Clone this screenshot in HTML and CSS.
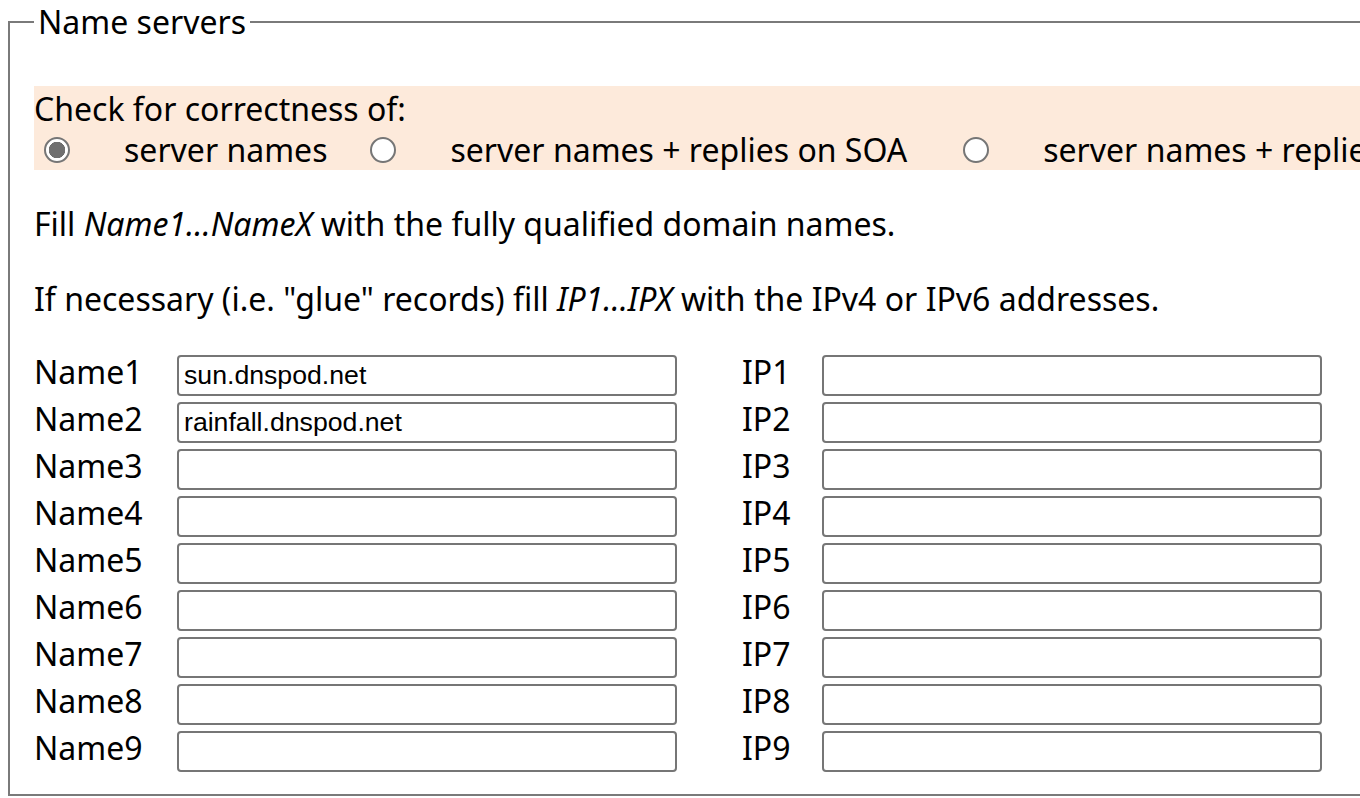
FILE: index.html
```html
<!DOCTYPE html>
<html lang="en">
  <head>
    <meta charset="UTF-8" />
    <meta name="viewport" content="width=device-width, initial-scale=1.0" />
    <title>Name servers</title>
    <link rel="stylesheet" href="styles.css">
  </head>
  <body>
    <!-- 名称服务器表单 -->
    <fieldset class="ns">
      <legend>Name servers</legend>

      <!-- 检查方式 -->
      <div class="check">
        <div>Check for correctness of:</div>
        <div class="opts">
          <input type="radio" name="check" id="c1" checked>
          <label for="c1">server names</label>
          <input type="radio" name="check" id="c2">
          <label for="c2">server names + replies on SOA</label>
          <input type="radio" name="check" id="c3">
          <label for="c3">server names + replies on SOA and NS</label>
        </div>
      </div>

      <p>Fill <em>Name1...NameX</em> with the fully qualified domain names.</p>
      <p>If necessary (i.e. "glue" records) fill <em>IP1...IPX</em> with the IPv4 or IPv6 addresses.</p>

      <!-- 名称和IP输入区 -->
      <div class="grid">
        <label>Name1</label><input type="text" value="sun.dnspod.net"><label class="ip">IP1</label><input type="text">
        <label>Name2</label><input type="text" value="rainfall.dnspod.net"><label class="ip">IP2</label><input type="text">
        <label>Name3</label><input type="text"><label class="ip">IP3</label><input type="text">
        <label>Name4</label><input type="text"><label class="ip">IP4</label><input type="text">
        <label>Name5</label><input type="text"><label class="ip">IP5</label><input type="text">
        <label>Name6</label><input type="text"><label class="ip">IP6</label><input type="text">
        <label>Name7</label><input type="text"><label class="ip">IP7</label><input type="text">
        <label>Name8</label><input type="text"><label class="ip">IP8</label><input type="text">
        <label>Name9</label><input type="text"><label class="ip">IP9</label><input type="text">
      </div>
    </fieldset>
  </body>
</html>
```
FILE: styles.css
```css
/* 样式初始化 */
* {
  box-sizing: border-box;
}
body {
  margin: 0;
  font-family: "Noto Sans", "Open Sans", sans-serif;
  font-size: 32px;
  line-height: 42px;
  color: #000;
  background: #fff;
  overflow: hidden;
}

/* 外框 */
.ns {
  width: 1500px;
  margin: 2px 0 0 8px;
  padding: 22px 24px 22px 24px;
  border: 2px solid #7a7a7a;
}
.ns legend {
  padding: 0 4px;
  line-height: 40px;
}

/* 检查方式区块 */
.check {
  margin-top: 22px;
  background-color: #fdeadb;
  white-space: nowrap;
}
.check > div:first-child {
  padding-top: 2px;
}
.opts {
  display: flex;
  align-items: center;
  height: 40px;
}
.opts input {
  appearance: none;
  flex: none;
  width: 26px;
  height: 26px;
  margin: 0 10px;
  border: 2px solid #767676;
  border-radius: 50%;
  background: #fff;
}
.opts input:checked {
  background: radial-gradient(circle, #6f6f6f 0 8px, #fff 8.5px);
}
.opts label {
  padding-left: 44px;
  margin-right: 33px;
}
.opts label[for="c2"] {
  margin-right: 46px;
}

p {
  margin: 33px 0 32px;
}
em {
  font-style: italic;
}

/* 输入表格 */
.grid {
  display: grid;
  grid-template-columns: 143px 500px 145px 500px;
  row-gap: 6px;
  margin-top: 35px;
  align-items: center;
}
.grid label {
  line-height: 40px;
  margin-top: -8px;
}
.grid .ip {
  padding-left: 65px;
}
.grid input {
  height: 41px;
  margin: 0;
  padding: 0 5px;
  border: 2px solid #767676;
  border-radius: 4px;
  font-family: "Liberation Sans", Arial, sans-serif;
  font-size: 26.67px;
  color: #000;
}
```
